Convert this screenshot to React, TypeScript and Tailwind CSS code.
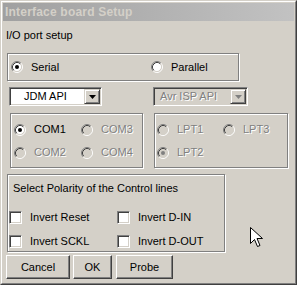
import React from 'react';

const face = 'bg-[#d4d0c8]';
const muted = 'text-[#808080] [text-shadow:1px_1px_0_#ffffff]';

function Radio({ checked = false, disabled = false }: { checked?: boolean; disabled?: boolean }) {
  return (
    <svg width="12" height="12" viewBox="0 0 12 12" className="shrink-0">
      <circle cx="6" cy="6" r="4.5" fill={disabled ? '#d4d0c8' : '#ffffff'} />
      <path d="M2.11 9.89 A5.5 5.5 0 0 1 9.89 2.11" stroke="#808080" fill="none" />
      <path d="M9.89 2.11 A5.5 5.5 0 0 1 2.11 9.89" stroke="#ffffff" fill="none" />
      <path d="M2.82 9.18 A4.5 4.5 0 0 1 9.18 2.82" stroke="#404040" fill="none" />
      <path d="M9.18 2.82 A4.5 4.5 0 0 1 2.82 9.18" stroke="#d4d0c8" fill="none" />
      {checked && <circle cx="6" cy="6" r="2" fill={disabled ? '#808080' : '#000000'} />}
    </svg>
  );
}

function RadioItem({ label, checked, disabled, className = '' }: { label: string; checked?: boolean; disabled?: boolean; className?: string }) {
  return (
    <div className={`flex items-center gap-[8px] ${className}`}>
      <Radio checked={checked} disabled={disabled} />
      <span className={disabled ? muted : 'text-black'}>{label}</span>
    </div>
  );
}

function Check({ label, className = '' }: { label: string; className?: string }) {
  return (
    <div className={`flex items-center gap-[8px] ${className}`}>
      <div className="w-[13px] h-[13px] bg-white border border-t-[#808080] border-l-[#808080] border-b-white border-r-white shadow-[inset_1px_1px_0_#404040,inset_-1px_-1px_0_#d4d0c8]" />
      <span>{label}</span>
    </div>
  );
}

function Combo({ value, disabled = false, className = '' }: { value: string; disabled?: boolean; className?: string }) {
  return (
    <div
      className={`flex h-[19px] border border-t-[#808080] border-l-[#808080] border-b-white border-r-white shadow-[inset_1px_1px_0_#404040,inset_-1px_-1px_0_#d4d0c8] p-[1px] ${disabled ? face : 'bg-white'} ${className}`}
    >
      <div className={`flex-1 flex items-center ${disabled ? 'pl-[5px] ' + muted : 'pl-[13px] text-black'}`}>{value}</div>
      <div className="w-[16px] flex items-center justify-center bg-[#d4d0c8] border border-t-[#d4d0c8] border-l-[#d4d0c8] border-b-[#404040] border-r-[#404040] shadow-[inset_1px_1px_0_#ffffff,inset_-1px_-1px_0_#808080]">
        <svg width="7" height="4" viewBox="0 0 7 4">
          <path d="M0 0h7L3.5 4z" fill={disabled ? '#808080' : '#000000'} />
        </svg>
      </div>
    </div>
  );
}

function Button({ label, className = '' }: { label: string; className?: string }) {
  return (
    <div className={`h-[24px] flex items-center justify-center bg-[#d4d0c8] border border-t-white border-l-white border-b-[#404040] border-r-[#404040] shadow-[inset_-1px_-1px_0_#808080] ${className}`}>
      {label}
    </div>
  );
}

const etched = 'border border-[#808080] shadow-[1px_1px_0_#ffffff,inset_1px_1px_0_#ffffff]';

export default function App() {
  return (
    <div className="relative w-[297px] h-[285px] bg-[#d4d0c8] font-['Liberation_Sans',Arial,sans-serif] text-[11px] leading-[13px] text-black overflow-hidden">
      <div className="h-full border border-t-[#d4d0c8] border-l-[#d4d0c8] border-b-[#404040] border-r-[#404040]">
        <div className="h-full border border-t-white border-l-white border-b-[#808080] border-r-[#808080] p-[1px] flex flex-col">
          {/* title bar */}
          <div className="h-[18px] flex items-center pl-[2px] bg-gradient-to-r from-[#a0a0a0] to-[#c2c2c2]">
            <span className="font-bold text-[12px] tracking-[0.2px] text-[#d4d0c8]">Interface board Setup</span>
          </div>

          <div className="flex flex-col">
            <div className="mt-[8px] ml-[3px]">I/O port setup</div>

            <div className={`mt-[11px] ml-[4px] w-[232px] h-[28px] flex items-center pl-[3px] ${etched}`}>
              <RadioItem label="Serial" checked className="w-[140px]" />
              <RadioItem label="Parallel" />
            </div>

            <div className="mt-[6px] flex">
              <Combo value="JDM API" className="ml-[6px] w-[93px]" />
              <Combo value="Avr ISP API" disabled className="ml-[51px] w-[95px]" />
            </div>

            <div className="mt-[7px] flex">
              <div className={`ml-[7px] w-[133px] h-[55px] pt-[4px] pl-[3px] grid grid-cols-[67px_auto] auto-rows-[23px] items-center ${etched}`}>
                <RadioItem label="COM1" checked />
                <RadioItem label="COM3" disabled />
                <RadioItem label="COM2" disabled />
                <RadioItem label="COM4" disabled />
              </div>
              <div className={`ml-[11px] w-[134px] h-[55px] pt-[4px] pl-[2px] grid grid-cols-[66px_auto] auto-rows-[23px] items-center ${etched}`}>
                <RadioItem label="LPT1" disabled />
                <RadioItem label="LPT3" disabled />
                <RadioItem label="LPT2" checked disabled />
              </div>
            </div>

            <div className={`mt-[6px] ml-[4px] w-[218px] h-[78px] flex flex-col ${etched}`}>
              <div className="mt-[7px] ml-[5px]">Select Polarity of the Control lines</div>
              <div className="mt-[10px] ml-[1px] grid grid-cols-[108px_auto] auto-rows-[24px] items-center">
                <Check label="Invert Reset" />
                <Check label="Invert D-IN" />
                <Check label="Invert SCKL" />
                <Check label="Invert D-OUT" />
              </div>
            </div>

            <div className="mt-[3px] ml-[3px] flex gap-[3px]">
              <Button label="Cancel" className="w-[64px]" />
              <Button label="OK" className="w-[39px]" />
              <Button label="Probe" className="w-[57px] ml-[1px]" />
            </div>
          </div>
        </div>
      </div>

      {/* mouse pointer */}
      <svg className="absolute left-[250px] top-[227px]" width="13" height="21" viewBox="0 0 13 21">
        <path d="M0.5 0.5 V16.5 L4.5 12.5 L7.5 19.5 L10 18.5 L7 11.5 H12.5 Z" fill="#ffffff" stroke="#000000" strokeLinejoin="miter" />
      </svg>
    </div>
  );
}
